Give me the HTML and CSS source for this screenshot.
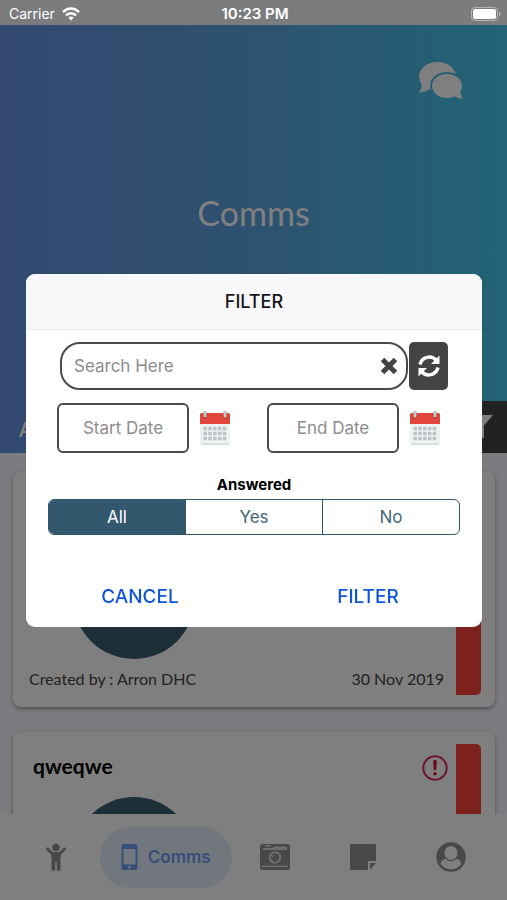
FILE: index.html
```html
<!DOCTYPE html>
<html lang="en">
<head>
    <meta charset="UTF-8">
    <meta name="viewport" content="width=device-width, initial-scale=1">
    <title>Comms</title>
    <link rel="stylesheet" href="styles.css">
</head>
<body>
    <div class="status-bar">
        <div class="carrier">
            <span>Carrier</span>
            <svg width="18" height="14" viewBox="0 0 18 14" fill="none" stroke="#fff" stroke-width="2.5">
                <path d="M1 5.2C5.6.4 12.4.4 17 5.2"/>
                <path d="M4 8.4c2.8-3 7.200-3 10 0"/>
                <path d="M6.300 10.600c1.600-1.600 3.800-1.600 5.400 0L9 13.500z" fill="#fff" stroke="none"/>
            </svg>
        </div>
        <div class="time">10:23 PM</div>
        <div class="battery">
            <svg width="30" height="14" viewBox="0 0 30 14">
                <rect x=".5" y=".5" width="26" height="13" rx="3.500" fill="none" stroke="#b4b5b7"/>
                <rect x="2" y="2" width="23" height="10" rx="2" fill="#fff"/>
                <path d="M28 4.500c2 .8 2 4.200 0 5z" fill="#b4b5b7"/>
            </svg>
        </div>
    </div>

    <div class="header">
        <svg class="chat-icon" width="46" height="40" viewBox="0 0 46 40" fill="#fff">
            <mask id="gap">
                <rect width="46" height="40" fill="#fff"/>
                <ellipse cx="29" cy="25" rx="17" ry="14" fill="#000"/>
            </mask>
            <g mask="url(#gap)">
                <ellipse cx="19.500" cy="15.500" rx="18.500" ry="14.500"/>
                <path d="M3 22c1.500 4 .5 6.500-2.500 9.500 5 0 8.500-1.500 11-4z"/>
            </g>
            <ellipse cx="29" cy="25" rx="15" ry="12"/>
            <path d="M42 30c.5 3.500 1.500 5.500 3 8-4.500-.5-7.500-2-10-4z"/>
        </svg>
        <h1>Comms</h1>
        <div class="toolbar">
            <span class="toolbar-tab">A</span>
            <button class="toolbar-filter" aria-label="Open filter">
                <svg width="26" height="26" viewBox="0 0 26 26" fill="#fff"><path d="M1 1h24l-9 10.500V25l-6-5v-8.500z"/></svg>
            </button>
        </div>
    </div>

    <div class="list">
        <div class="card">
            <div class="card-main">
                <div class="card-head"></div>
                <div class="avatar"></div>
                <div class="card-foot">
                    <span>Created by : Arron DHC</span>
                    <span>30 Nov 2019</span>
                </div>
            </div>
            <div class="card-bar"></div>
        </div>
        <div class="card">
            <div class="card-main">
                <div class="card-head">
                    <h2>qweqwe</h2>
                    <svg width="26" height="26" viewBox="0 0 26 26">
                        <circle cx="13" cy="13" r="11.700" fill="none" stroke="#dc2660" stroke-width="2"/>
                        <path d="M11.200 6.500a1.800 1.800 0 0 1 3.600 0l-.5 8.500h-2.600z" fill="#dc1648"/>
                        <circle cx="13" cy="18.800" r="1.800" fill="#dc1648"/>
                    </svg>
                </div>
                <div class="avatar"></div>
            </div>
            <div class="card-bar"></div>
        </div>
    </div>

    <nav class="nav">
        <a href="#" class="nav-item" aria-label="Children">
            <svg width="20" height="28" viewBox="0 0 20 28" fill="currentColor">
                <circle cx="10" cy="4.500" r="3.700"/>
                <path d="M1.900 4.600 6.500 9h7l4.600-4.400a1.300 1.300 0 0 1 1.700 1.900L14.500 12v14a1.500 1.500 0 0 1-3.700 0v-6.500H9.200V26a1.500 1.500 0 0 1-3.700 0V12L.2 6.500a1.300 1.300 0 0 1 1.700-1.900z"/>
            </svg>
        </a>
        <a href="#" class="nav-item active">
            <svg width="17" height="28" viewBox="0 0 17 28" fill="currentColor" fill-rule="evenodd">
                <path d="M3 1h11a2.500 2.500 0 0 1 2.500 2.500v21A2.500 2.500 0 0 1 14 27H3A2.500 2.500 0 0 1 .5 24.500v-21A2.500 2.500 0 0 1 3 1zM2.500 6v15.500h12V6zM7 24.300a1.500 1.500 0 1 0 3 0 1.500 1.500 0 0 0-3 0z"/>
            </svg>
            <span>Comms</span>
        </a>
        <a href="#" class="nav-item" aria-label="Photos">
            <svg width="30" height="26" viewBox="0 0 30 26">
                <rect width="30" height="26" rx="2.500" fill="currentColor"/>
                <path d="M3 6V4h10l1-1.500h13V6zM2 21.500h26v1.500H2z" fill="#ddd"/>
                <path d="M5 1h6v1.500H5z" fill="#ddd"/>
                <circle cx="15" cy="13.500" r="6.500" fill="currentColor"/>
                <circle cx="15" cy="13.500" r="5.200" fill="none" stroke="#ddd" stroke-width="2"/>
                <path d="M12.500 13.500a2.500 2.500 0 0 1 2.500-2.500" fill="none" stroke="#ddd"/>
            </svg>
        </a>
        <a href="#" class="nav-item" aria-label="Notes">
            <svg width="26" height="26" viewBox="0 0 26 26" fill="currentColor">
                <path d="M1 0h24a1 1 0 0 1 1 1v16h-8v9H1a1 1 0 0 1-1-1V1a1 1 0 0 1 1-1z"/>
                <path d="M20 19h6l-6 6.500z"/>
            </svg>
        </a>
        <a href="#" class="nav-item" aria-label="Profile">
            <svg width="30" height="30" viewBox="0 0 30 30">
                <circle cx="15" cy="15" r="14.700" fill="currentColor"/>
                <ellipse cx="15" cy="11" rx="6.500" ry="7" fill="#fff"/>
                <path d="M4.500 22c1-4 3.500-5 5.500-5 3 3 7 3 10 0 2 0 4.500 1 5.500 5-5 7-16 7-21 0z" fill="#fff"/>
            </svg>
        </a>
    </nav>

    <div class="overlay">
        <form class="modal" role="dialog" aria-labelledby="filter-title">
            <h2 class="modal-header" id="filter-title">FILTER</h2>

            <div class="search-row">
                <div class="search-box">
                    <input type="text" placeholder="Search Here" aria-label="Search">
                    <button type="button" aria-label="Clear search">
                        <svg width="18" height="18" viewBox="0 0 18 18" stroke="#444" stroke-width="5"><path d="M2.500 2.500l13 13M15.500 2.500l-13 13"/></svg>
                    </button>
                </div>
                <button type="button" class="refresh" aria-label="Refresh">
                    <svg width="24" height="24" viewBox="0 0 24 24" fill="none" stroke="#fff" stroke-width="3.400">
                        <path d="M3 10.500C5 2.500 14.500 1 19 6"/>
                        <path d="M21 13.500C19 21.500 9.500 23 5 18"/>
                        <path d="M22.500 1.500V10H14z" fill="#fff" stroke="none"/>
                        <path d="M1.500 22.500V14H10z" fill="#fff" stroke="none"/>
                    </svg>
                </button>
            </div>

            <div class="date-row">
                <label class="date-field">
                    <input type="text" placeholder="Start Date" aria-label="Start Date">
                    <svg width="30" height="36" viewBox="0 0 30 36">
                        <rect x=".5" y="4" width="29" height="31" rx="2" fill="#d3dadd"/>
                        <rect x=".5" y="4" width="29" height="29.500" rx="2" fill="#eef2f3"/>
                        <path d="M0 14V4.500A1.500 1.500 0 0 1 1.500 3h27A1.500 1.500 0 0 1 30 4.500V14z" fill="#e2463a"/>
                        <path d="M5 4v3M25 4v3" stroke="#a8392f" stroke-width="4" stroke-linecap="round"/>
                        <path d="M5 2v4M25 2v4" stroke="#c3cacb" stroke-width="3" stroke-linecap="round"/>
                        <path d="M3.500 18.500h23M3.500 23.500h23M3.500 28.500h23" stroke="#bcc3c7" stroke-width="3.500" stroke-dasharray="3.500 1.300"/>
                    </svg>
                </label>
                <label class="date-field">
                    <input type="text" placeholder="End Date" aria-label="End Date">
                    <svg width="30" height="36" viewBox="0 0 30 36">
                        <rect x=".5" y="4" width="29" height="31" rx="2" fill="#d3dadd"/>
                        <rect x=".5" y="4" width="29" height="29.500" rx="2" fill="#eef2f3"/>
                        <path d="M0 14V4.500A1.500 1.500 0 0 1 1.500 3h27A1.500 1.500 0 0 1 30 4.500V14z" fill="#e2463a"/>
                        <path d="M5 4v3M25 4v3" stroke="#a8392f" stroke-width="4" stroke-linecap="round"/>
                        <path d="M5 2v4M25 2v4" stroke="#c3cacb" stroke-width="3" stroke-linecap="round"/>
                        <path d="M3.500 18.500h23M3.500 23.500h23M3.500 28.500h23" stroke="#bcc3c7" stroke-width="3.500" stroke-dasharray="3.500 1.300"/>
                    </svg>
                </label>
            </div>

            <div class="answered" id="answered-label">Answered</div>
            <div class="segments" role="radiogroup" aria-labelledby="answered-label">
                <label class="segment"><input type="radio" name="answered" value="all" checked><span>All</span></label>
                <label class="segment"><input type="radio" name="answered" value="yes"><span>Yes</span></label>
                <label class="segment"><input type="radio" name="answered" value="no"><span>No</span></label>
            </div>

            <div class="modal-footer">
                <button type="button">CANCEL</button>
                <button type="submit">FILTER</button>
            </div>
        </form>
    </div>
</body>
</html>
```
FILE: styles.css
```css
* {
    box-sizing: border-box;
}

body {
    margin: 0;
    height: 100vh;
    display: flex;
    flex-direction: column;
    overflow: hidden;
    font-family: Inter, "Liberation Sans", sans-serif;
    background-color: #f4f8ff;
}

h1, h2 {
    margin: 0;
}

button {
    display: flex;
    align-items: center;
    justify-content: center;
    padding: 0;
    border: none;
    background: none;
    font-family: inherit;
    cursor: pointer;
}

svg {
    display: block;
    flex-shrink: 0;
}

/* Status bar stays above the overlay */
.status-bar {
    position: relative;
    z-index: 20;
    display: grid;
    grid-template-columns: 1fr auto 1fr;
    align-items: center;
    flex-shrink: 0;
    height: 25px;
    padding: 2px 6px 0 9px;
    background-color: #7b7c7e;
    color: white;
    font-size: 14px;
}

.carrier {
    display: flex;
    align-items: center;
    gap: 7px;
}

.time {
    font-size: 15px;
    font-weight: 600;
}

.battery {
    justify-self: end;
}

.header {
    display: flex;
    flex-direction: column;
    flex-shrink: 0;
    height: 428px;
    padding-top: 36px;
    background: linear-gradient(to right, #6692e2, #5ca4e0 50%, #44c8ec);
    color: white;
}

.chat-icon {
    align-self: flex-end;
    margin-right: 43px;
}

.header h1 {
    margin-top: 90px;
    font-family: Lato, sans-serif;
    font-size: 34px;
    font-weight: 400;
    line-height: 44px;
    text-align: center;
}

.toolbar {
    display: flex;
    justify-content: space-between;
    height: 52px;
    margin-top: auto;
}

.toolbar-tab {
    padding-left: 19px;
    font-family: Lato, sans-serif;
    font-size: 20px;
    font-weight: 700;
    line-height: 56px;
}

.toolbar-filter {
    width: 52px;
    background-color: #444;
}

.list {
    flex: 1;
    min-height: 0;
    overflow: hidden;
    padding: 19px 12px 0 13px;
}

.card {
    display: flex;
    height: 235px;
    margin-bottom: 25px;
    padding: 12px 14px 12px 16px;
    border-radius: 8px;
    background-color: white;
    box-shadow: 0 2px 4px rgba(0,0,0,0.35);
    font-family: Lato, sans-serif;
}

.card-main {
    flex: 1;
    padding-right: 12px;
}

.card-head {
    display: flex;
    align-items: center;
    justify-content: space-between;
    height: 48px;
    margin: 0 -4px 5px 0;
    padding-left: 4px;
}

.card-head h2 {
    font-size: 21px;
    font-weight: 700;
    line-height: 20px;
    padding-bottom: 4px;
}

.avatar {
    width: 122px;
    height: 122px;
    margin-left: 44px;
    border-radius: 50%;
    background-color: #3a6074;
}

.card-foot {
    display: flex;
    justify-content: space-between;
    color: #444;
    font-size: 16px;
    line-height: 40px;
}

.card-bar {
    width: 25px;
    border-radius: 0 5px 5px 0;
    background-color: #fa4238;
}

.nav {
    display: flex;
    align-items: center;
    flex-shrink: 0;
    height: 86px;
    padding: 0 12px;
    background-color: white;
}

.nav-item {
    display: flex;
    flex: 2;
    align-items: center;
    justify-content: center;
    gap: 10px;
    height: 61px;
    color: #909090;
    text-decoration: none;
}

.nav-item.active {
    flex: 3;
    border-radius: 31px;
    background-color: #e4eefc;
    color: #6c9cf4;
    font-size: 17px;
    font-weight: 600;
}

.overlay {
    position: fixed;
    inset: 0;
    z-index: 10;
    display: flex;
    align-items: center;
    justify-content: center;
    padding: 1px 25px 0 26px;
    background-color: rgba(0,0,0,0.5);
}

.modal {
    width: 100%;
    overflow: hidden;
    border-radius: 9px;
    background-color: white;
}

.modal-header {
    height: 56px;
    border-bottom: 1px solid #ebebee;
    background-color: #f8f8fb;
    color: #16161c;
    font-size: 18px;
    font-weight: 500;
    line-height: 56px;
    text-align: center;
}

.search-row {
    display: flex;
    gap: 1px;
    height: 48px;
    margin: 12px 34px 13px;
}

.search-box {
    display: flex;
    flex: 1;
    align-items: center;
    padding: 0 8px 0 12px;
    border: 2px solid #4a4a4a;
    border-radius: 20px;
}

input {
    min-width: 0;
    font-family: inherit;
    font-size: 17px;
}

input::placeholder {
    color: #8c8c8c;
    opacity: 1;
}

.search-box input {
    flex: 1;
    padding: 0;
    border: none;
    outline: none;
    background: none;
}

.refresh {
    width: 39px;
    border-radius: 5px;
    background-color: #444;
}

.date-row {
    display: flex;
    gap: 37px;
    margin: 0 42px 0 31px;
}

.date-field {
    display: flex;
    flex: 1;
    align-items: center;
    gap: 11px;
}

.date-field input {
    flex: 1;
    width: 100%;
    height: 50px;
    padding: 0;
    border: 2px solid #4a4a4a;
    border-radius: 6px;
    text-align: center;
}

.answered {
    margin-top: 22px;
    font-size: 15px;
    font-weight: 700;
    line-height: 20px;
    text-align: center;
}

.segments {
    display: flex;
    height: 36px;
    margin: 4px 22px 30px;
    overflow: hidden;
    border: 1px solid #33586e;
    border-radius: 6px;
}

.segment {
    display: flex;
    flex: 1;
    cursor: pointer;
}

.segment + .segment {
    border-left: 1px solid #33586e;
}

.segment input {
    width: 0;
    margin: 0;
    appearance: none;
}

.segment span {
    flex: 1;
    color: #43667a;
    font-size: 17px;
    line-height: 34px;
    text-align: center;
}

.segment input:checked + span {
    background-color: #33586e;
    color: white;
}

.modal-footer {
    display: flex;
}

.modal-footer button {
    flex: 1;
    height: 62px;
    color: #0f55dc;
    font-size: 19px;
    font-weight: 500;
}
```
